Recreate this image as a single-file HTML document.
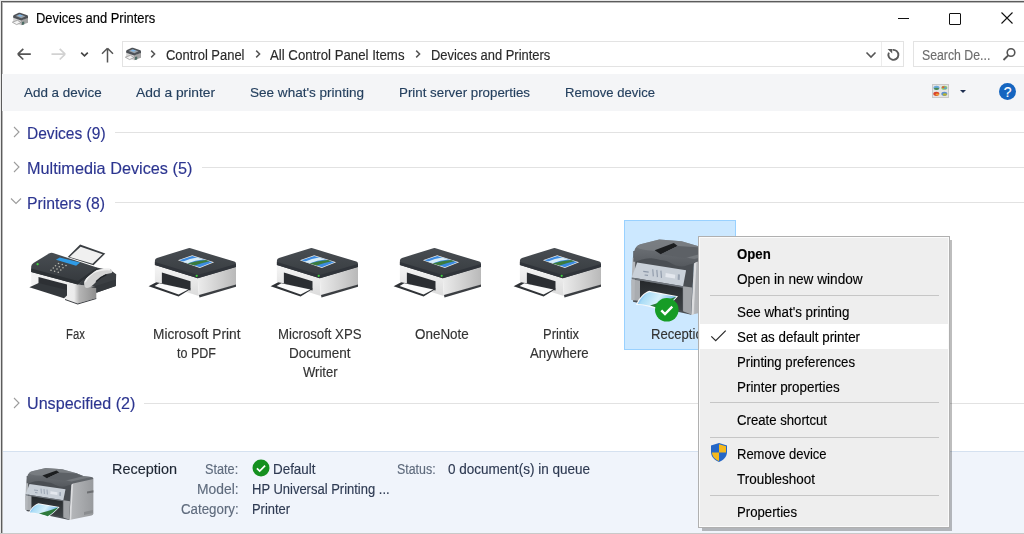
<!DOCTYPE html><html><head><meta charset="utf-8"><style>
html,body{margin:0;padding:0;width:1024px;height:534px;overflow:hidden;background:#fff}
body{position:relative;font-family:"Liberation Sans",sans-serif}
.t{position:absolute;line-height:0;white-space:nowrap;font-family:"Liberation Sans",sans-serif;transform-origin:0 0;-webkit-text-stroke:0.15px currentColor}
svg{overflow:visible}
</style></head><body>
<div style="z-index:1;position:absolute;left:0;top:0;width:1024px;height:534px;background:#e9e9e9"></div>
<div style="z-index:1;position:absolute;left:1px;top:1px;width:1023px;height:532px;background:#fff;border-left:1px solid #5c5c5c;border-top:1px solid #5c5c5c;box-sizing:border-box"></div>
<div style="z-index:1;position:absolute;left:0;top:533px;width:1024px;height:1px;background:#c9c9c9"></div>
<div style="z-index:1;position:absolute;left:2px;top:2px;width:1022px;height:1px;background:#b9b9b9"></div>
<div style="z-index:1;position:absolute;left:2px;top:2px;width:1px;height:531px;background:#b9b9b9"></div>
<div style="z-index:1;position:absolute;left:898px;top:18px;width:11px;height:1px;background:#111"></div>
<div style="z-index:1;position:absolute;left:949px;top:12.5px;width:10px;height:10px;border:1.2px solid #111;box-sizing:content-box;border-radius:1px"></div>
<svg style="z-index:1;position:absolute;left:1000px;top:11px" width="14" height="14" viewBox="0 0 14 14"><path d="M1.5 1.5L12.5 12.5M12.5 1.5L1.5 12.5" stroke="#111" stroke-width="1.1"/></svg>
<svg style="z-index:1;position:absolute;left:14px;top:46px" width="20" height="16" viewBox="0 0 20 16"><path d="M3.8 8.2H16.8M3.8 8.2L9.3 2.9M3.8 8.2L9.3 13.5" stroke="#555" stroke-width="1.7" fill="none"/></svg>
<svg style="z-index:1;position:absolute;left:49px;top:46px" width="20" height="16" viewBox="0 0 20 16"><path d="M2.5 8.2H16.2M16.2 8.2L10.7 2.9M16.2 8.2L10.7 13.5" stroke="#d2d2d2" stroke-width="1.7" fill="none"/></svg>
<svg style="z-index:1;position:absolute;left:79px;top:49px" width="11" height="9" viewBox="0 0 11 9"><path d="M2.2 3.6L5.5 6.8L8.8 3.6" stroke="#444" stroke-width="1.7" fill="none"/></svg>
<svg style="z-index:1;position:absolute;left:99px;top:46px" width="16" height="18" viewBox="0 0 16 18"><path d="M8.5 2.3V16.5M8.5 2.3L3 7.8M8.5 2.3L14 7.8" stroke="#555" stroke-width="1.5" fill="none"/></svg>
<div style="z-index:1;position:absolute;left:122px;top:41px;width:782px;height:26px;border:1px solid #e3e3e3;box-sizing:border-box"></div>
<div style="z-index:1;position:absolute;left:881px;top:42px;width:1px;height:24px;background:#ececec"></div>
<div style="z-index:1;position:absolute;left:913px;top:41px;width:120px;height:26px;border:1px solid #e3e3e3;box-sizing:border-box"></div>
<svg style="z-index:1;position:absolute;left:149px;top:49px" width="8" height="10" viewBox="0 0 8 10"><path d="M2.2 1.6L5.6 5L2.2 8.4" stroke="#555" stroke-width="1.5" fill="none"/></svg>
<svg style="z-index:1;position:absolute;left:253.5px;top:49px" width="8" height="10" viewBox="0 0 8 10"><path d="M2.2 1.6L5.6 5L2.2 8.4" stroke="#555" stroke-width="1.5" fill="none"/></svg>
<svg style="z-index:1;position:absolute;left:413.5px;top:49px" width="8" height="10" viewBox="0 0 8 10"><path d="M2.2 1.6L5.6 5L2.2 8.4" stroke="#555" stroke-width="1.5" fill="none"/></svg>
<svg style="z-index:1;position:absolute;left:864px;top:50px" width="14" height="10" viewBox="0 0 14 10"><path d="M2.5 2.5L7 7L11.5 2.5" stroke="#555" stroke-width="1.6" fill="none"/></svg>
<svg style="z-index:1;position:absolute;left:885px;top:47px" width="16" height="16" viewBox="0 0 16 16"><path d="M7.6 2.9A5 5 0 1 1 3.9 5.6" stroke="#5a5a5a" stroke-width="1.9" fill="none"/><path d="M2.6 1.9L7.2 1.9L7.2 6.5Z" fill="#5a5a5a"/></svg>
<svg style="z-index:1;position:absolute;left:1000px;top:46px" width="18" height="16" viewBox="0 0 18 16"><circle cx="11" cy="6.5" r="3.8" stroke="#555" stroke-width="1.6" fill="none"/><path d="M8.2 9.3L3.5 14" stroke="#555" stroke-width="1.8"/></svg>
<div style="z-index:1;position:absolute;left:2px;top:74px;width:1022px;height:37px;background:#f4f5f7"></div>
<div style="z-index:1;position:absolute;left:959.5px;top:89.5px;width:0;height:0;border-left:3px solid transparent;border-right:3px solid transparent;border-top:3.5px solid #1e2f50"></div>
<div style="z-index:1;position:absolute;left:999px;top:83px;width:17px;height:17px;border-radius:50%;background:#1565c0"></div>
<svg style="z-index:1;position:absolute;left:931.5px;top:84px" width="17" height="14" viewBox="0 0 17 14"><rect x="0.5" y="0.5" width="16" height="13" fill="#e4e4e4" stroke="#c9c9c9"/><ellipse cx="4.5" cy="3.8" rx="3" ry="2" fill="#6aa9dc"/><ellipse cx="4.5" cy="4.8" rx="2.6" ry="1.1" fill="#4d8a52"/><ellipse cx="12.3" cy="3.8" rx="3" ry="2" fill="#8cc46a"/><ellipse cx="11.3" cy="3.3" rx="1.4" ry="1" fill="#e05a3a"/><ellipse cx="13.3" cy="4.2" rx="1.3" ry="0.9" fill="#5aa0d8"/><ellipse cx="4.3" cy="9.8" rx="3" ry="2.1" fill="#d8442a"/><ellipse cx="5.3" cy="10.6" rx="1.8" ry="1" fill="#f0a030"/><ellipse cx="12.3" cy="9.8" rx="3" ry="2.1" fill="#5b8fd0"/><ellipse cx="12.8" cy="10.5" rx="2" ry="1.2" fill="#b9b22e"/></svg>
<div style="z-index:1;position:absolute;left:115px;top:132px;width:909px;height:1px;background:#e2e2e2"></div>
<svg style="z-index:1;position:absolute;left:12px;top:126px" width="9" height="12" viewBox="0 0 9 12"><path d="M2 1L7 6L2 11" stroke="#9c9c9c" stroke-width="1.1" fill="none"/></svg>
<div style="z-index:1;position:absolute;left:202px;top:167px;width:822px;height:1px;background:#e2e2e2"></div>
<svg style="z-index:1;position:absolute;left:12px;top:161px" width="9" height="12" viewBox="0 0 9 12"><path d="M2 1L7 6L2 11" stroke="#9c9c9c" stroke-width="1.1" fill="none"/></svg>
<div style="z-index:1;position:absolute;left:115px;top:202px;width:909px;height:1px;background:#e2e2e2"></div>
<svg style="z-index:1;position:absolute;left:10px;top:197px" width="12" height="8" viewBox="0 0 12 8"><path d="M1 1.5L6 6.5L11 1.5" stroke="#9c9c9c" stroke-width="1.1" fill="none"/></svg>
<div style="z-index:1;position:absolute;left:144px;top:403px;width:880px;height:1px;background:#e2e2e2"></div>
<svg style="z-index:1;position:absolute;left:12px;top:397px" width="9" height="12" viewBox="0 0 9 12"><path d="M2 1L7 6L2 11" stroke="#9c9c9c" stroke-width="1.1" fill="none"/></svg>
<div style="z-index:1;position:absolute;left:624px;top:220px;width:112px;height:130px;background:#cce8ff;border:1px solid #99d1ff;box-sizing:border-box"></div>
<svg style="z-index:1;position:absolute;left:25px;top:240px" width="100" height="66" viewBox="0 0 100 66">
<defs>
<linearGradient id="fx_t" x1="0" y1="0" x2="0" y2="1"><stop offset="0" stop-color="#484d52"/><stop offset="1" stop-color="#34383c"/></linearGradient>
<linearGradient id="fx_b" x1="0" y1="0" x2="1" y2="0"><stop offset="0" stop-color="#f2f2f2"/><stop offset="0.66" stop-color="#ececec"/><stop offset="0.74" stop-color="#b5b5b5"/><stop offset="1" stop-color="#8e8e8e"/></linearGradient>
</defs>
<path d="M6.2 32 L52.8 44.4 L71.3 47 L71.3 58 L52.7 63.4 L40 59 L6.2 45 Z" fill="url(#fx_b)"/>
<path d="M40 59 L52.7 63.4 L71.3 58 L71.3 59 L52.7 64.4 L40 60 Z" fill="#3a3d41"/>
<path d="M13.5 37 L42 44.5 L42 55 L13.5 47 Z" fill="#2d3034"/>
<path d="M4.4 47.3 L13.7 43 L42 50 L42 55.6 L39 58.2 Z" fill="#34383c"/>
<path d="M52.8 44.5 L71.7 27.5 L86 30.5 L91.2 34.2 L90.8 45.9 L71.3 52.7 L71.3 47 Z" fill="#3b3f43"/>
<path d="M66 47.5 L91 39.5 L90.8 45.9 L71.3 52.7 L71.3 48 Z" fill="#34383c"/>
<path d="M59 42.5 C61 38 66 32.5 71 30.5 C75 29 80 28.3 85.9 29 L87.4 31.2 L86.7 33.1 C83 33.5 80 34.5 77 36.5 C74 38.5 72 40.5 70 43 C67 46 65 47.7 62 48 C60 48 59 46 59 42.5 Z" fill="#d3d3d3"/>
<path d="M60 42 C62.5 37.5 67 33 71.5 31.3 C75.5 29.8 80 29.2 85 29.6" stroke="#efefef" stroke-width="1.6" fill="none"/>
<path d="M71 41.7 C74 38.5 77.5 36 81.4 34.6" stroke="#1e2125" stroke-width="1.2" fill="none"/>
<path d="M6.2 26.5 Q6.2 24.5 8.5 23 L24 13.5 Q25.8 12.5 28 13 L71.9 27.5 L52.8 44.4 L6.2 32 Z" fill="url(#fx_t)"/>
<path d="M6.2 28.5 L52.8 41 L71.9 27.5 L71.9 29.5 L52.8 44.4 L6.2 32 Z" fill="#2c3034"/>
<path d="M42.7 16.9 L55.1 4.5 L80.3 13.5 L68.5 25.3 Z" fill="#3a3e42"/>
<path d="M44.6 16.9 L55.6 6.7 L77.5 14.2 L67.5 23.8 Z" fill="#f0f0f0"/>
<path d="M30.9 19.7 L34.8 17.4 L55.1 22.5 L51.1 25.8 Z" fill="#2f9be6"/>
<g fill="#b8b8b0">
<circle cx="33.5" cy="23.5" r="0.8"/><circle cx="37.3" cy="24.5" r="0.8"/><circle cx="41" cy="25.5" r="0.8"/>
<circle cx="30.5" cy="25.7" r="0.8"/><circle cx="34.3" cy="26.7" r="0.8"/><circle cx="38" cy="27.7" r="0.8"/>
<circle cx="28.3" cy="28" r="0.8"/><circle cx="32" cy="29" r="0.8"/><circle cx="35.8" cy="30" r="0.8"/>
<circle cx="26" cy="30.2" r="0.8"/><circle cx="29.6" cy="31.2" r="0.8"/><circle cx="33.3" cy="32.2" r="0.8"/>
</g>
<circle cx="12.6" cy="24.2" r="1.1" fill="#3fd13f"/>
</svg>
<svg style="z-index:1;position:absolute;left:145px;top:240px" width="100" height="62" viewBox="0 0 100 62">
<defs>
<linearGradient id="pg_r145" x1="0" y1="0" x2="1" y2="0"><stop offset="0" stop-color="#ececec"/><stop offset="1" stop-color="#b9b9b9"/></linearGradient>
<linearGradient id="pg_t145" x1="0" y1="0" x2="0" y2="1"><stop offset="0" stop-color="#484d52"/><stop offset="1" stop-color="#373b3f"/></linearGradient>
<linearGradient id="pg_f145" x1="0" y1="0" x2="0" y2="1"><stop offset="0" stop-color="#f6f6f6"/><stop offset="1" stop-color="#dcdcdc"/></linearGradient>
</defs>
<path d="M9.9 24.5 L52.8 38 L53.8 56 L9.9 42 Z" fill="url(#pg_f145)"/>
<path d="M52.8 38 L91 27 L91 45 L54 55.5 Z" fill="url(#pg_r145)"/>
<path d="M54 55 L91 44.5 L91 46.8 L54.5 57.5 Z" fill="#3b3e42"/>
<path d="M16.9 32.6 L45.5 41.3 L45.5 50.5 L16.9 43.5 Z" fill="#2b2e32"/>
<path d="M3.6 46.3 L11.2 42.3 L46 48.8 L33.6 56.5 Z" fill="#2f3236"/>
<path d="M9.6 45.9 L14.3 43.3 L43.3 49.5 L33.6 54.6 Z" fill="#fbfbfb"/>
<path d="M9.9 20.8 Q9.9 18.6 12 17.9 L43.3 8.3 Q44.4 7.9 45.6 8.3 L89.3 21.6 Q91 22.2 91 23.8 L91 27 L52.8 38.3 L9.9 25 Z" fill="url(#pg_t145)"/>
<path d="M9.9 22 L52.8 35 L91 24 L91 27 L52.8 38.3 L9.9 25 Z" fill="#30343a"/>
<path d="M32.9 20.2 L47.2 15.2 L69.1 22.3 L54.8 28 Z" fill="#f2f0ea"/>
<path d="M34.4 20.3 L47.3 15.9 L67.4 22.3 L54.8 27.2 Z" fill="#3d8be0"/>
<path d="M37.5 21.8 Q45 18.5 52 17.6 L58.5 19.6 Q50 20.5 43 23.2 Z" fill="#d6ecf8"/>
<path d="M42.5 23.5 Q52 20.5 61 20 L64.5 21.2 Q56 23 49.5 25.6 Z" fill="#3b7b3e"/>

<circle cx="51.7" cy="35.8" r="1.1" fill="#3cd23c"/>
</svg>
<svg style="z-index:1;position:absolute;left:267.3px;top:240px" width="100" height="62" viewBox="0 0 100 62">
<defs>
<linearGradient id="pg_r267_3" x1="0" y1="0" x2="1" y2="0"><stop offset="0" stop-color="#ececec"/><stop offset="1" stop-color="#b9b9b9"/></linearGradient>
<linearGradient id="pg_t267_3" x1="0" y1="0" x2="0" y2="1"><stop offset="0" stop-color="#484d52"/><stop offset="1" stop-color="#373b3f"/></linearGradient>
<linearGradient id="pg_f267_3" x1="0" y1="0" x2="0" y2="1"><stop offset="0" stop-color="#f6f6f6"/><stop offset="1" stop-color="#dcdcdc"/></linearGradient>
</defs>
<path d="M9.9 24.5 L52.8 38 L53.8 56 L9.9 42 Z" fill="url(#pg_f267_3)"/>
<path d="M52.8 38 L91 27 L91 45 L54 55.5 Z" fill="url(#pg_r267_3)"/>
<path d="M54 55 L91 44.5 L91 46.8 L54.5 57.5 Z" fill="#3b3e42"/>
<path d="M16.9 32.6 L45.5 41.3 L45.5 50.5 L16.9 43.5 Z" fill="#2b2e32"/>
<path d="M3.6 46.3 L11.2 42.3 L46 48.8 L33.6 56.5 Z" fill="#2f3236"/>
<path d="M9.6 45.9 L14.3 43.3 L43.3 49.5 L33.6 54.6 Z" fill="#fbfbfb"/>
<path d="M9.9 20.8 Q9.9 18.6 12 17.9 L43.3 8.3 Q44.4 7.9 45.6 8.3 L89.3 21.6 Q91 22.2 91 23.8 L91 27 L52.8 38.3 L9.9 25 Z" fill="url(#pg_t267_3)"/>
<path d="M9.9 22 L52.8 35 L91 24 L91 27 L52.8 38.3 L9.9 25 Z" fill="#30343a"/>
<path d="M32.9 20.2 L47.2 15.2 L69.1 22.3 L54.8 28 Z" fill="#f2f0ea"/>
<path d="M34.4 20.3 L47.3 15.9 L67.4 22.3 L54.8 27.2 Z" fill="#3d8be0"/>
<path d="M37.5 21.8 Q45 18.5 52 17.6 L58.5 19.6 Q50 20.5 43 23.2 Z" fill="#d6ecf8"/>
<path d="M42.5 23.5 Q52 20.5 61 20 L64.5 21.2 Q56 23 49.5 25.6 Z" fill="#3b7b3e"/>

<circle cx="51.7" cy="35.8" r="1.1" fill="#3cd23c"/>
</svg>
<svg style="z-index:1;position:absolute;left:390.1px;top:240px" width="100" height="62" viewBox="0 0 100 62">
<defs>
<linearGradient id="pg_r390_1" x1="0" y1="0" x2="1" y2="0"><stop offset="0" stop-color="#ececec"/><stop offset="1" stop-color="#b9b9b9"/></linearGradient>
<linearGradient id="pg_t390_1" x1="0" y1="0" x2="0" y2="1"><stop offset="0" stop-color="#484d52"/><stop offset="1" stop-color="#373b3f"/></linearGradient>
<linearGradient id="pg_f390_1" x1="0" y1="0" x2="0" y2="1"><stop offset="0" stop-color="#f6f6f6"/><stop offset="1" stop-color="#dcdcdc"/></linearGradient>
</defs>
<path d="M9.9 24.5 L52.8 38 L53.8 56 L9.9 42 Z" fill="url(#pg_f390_1)"/>
<path d="M52.8 38 L91 27 L91 45 L54 55.5 Z" fill="url(#pg_r390_1)"/>
<path d="M54 55 L91 44.5 L91 46.8 L54.5 57.5 Z" fill="#3b3e42"/>
<path d="M16.9 32.6 L45.5 41.3 L45.5 50.5 L16.9 43.5 Z" fill="#2b2e32"/>
<path d="M3.6 46.3 L11.2 42.3 L46 48.8 L33.6 56.5 Z" fill="#2f3236"/>
<path d="M9.6 45.9 L14.3 43.3 L43.3 49.5 L33.6 54.6 Z" fill="#fbfbfb"/>
<path d="M9.9 20.8 Q9.9 18.6 12 17.9 L43.3 8.3 Q44.4 7.9 45.6 8.3 L89.3 21.6 Q91 22.2 91 23.8 L91 27 L52.8 38.3 L9.9 25 Z" fill="url(#pg_t390_1)"/>
<path d="M9.9 22 L52.8 35 L91 24 L91 27 L52.8 38.3 L9.9 25 Z" fill="#30343a"/>
<path d="M32.9 20.2 L47.2 15.2 L69.1 22.3 L54.8 28 Z" fill="#f2f0ea"/>
<path d="M34.4 20.3 L47.3 15.9 L67.4 22.3 L54.8 27.2 Z" fill="#3d8be0"/>
<path d="M37.5 21.8 Q45 18.5 52 17.6 L58.5 19.6 Q50 20.5 43 23.2 Z" fill="#d6ecf8"/>
<path d="M42.5 23.5 Q52 20.5 61 20 L64.5 21.2 Q56 23 49.5 25.6 Z" fill="#3b7b3e"/>

<circle cx="51.7" cy="35.8" r="1.1" fill="#3cd23c"/>
</svg>
<svg style="z-index:1;position:absolute;left:510.3px;top:240px" width="100" height="62" viewBox="0 0 100 62">
<defs>
<linearGradient id="pg_r510_3" x1="0" y1="0" x2="1" y2="0"><stop offset="0" stop-color="#ececec"/><stop offset="1" stop-color="#b9b9b9"/></linearGradient>
<linearGradient id="pg_t510_3" x1="0" y1="0" x2="0" y2="1"><stop offset="0" stop-color="#484d52"/><stop offset="1" stop-color="#373b3f"/></linearGradient>
<linearGradient id="pg_f510_3" x1="0" y1="0" x2="0" y2="1"><stop offset="0" stop-color="#f6f6f6"/><stop offset="1" stop-color="#dcdcdc"/></linearGradient>
</defs>
<path d="M9.9 24.5 L52.8 38 L53.8 56 L9.9 42 Z" fill="url(#pg_f510_3)"/>
<path d="M52.8 38 L91 27 L91 45 L54 55.5 Z" fill="url(#pg_r510_3)"/>
<path d="M54 55 L91 44.5 L91 46.8 L54.5 57.5 Z" fill="#3b3e42"/>
<path d="M16.9 32.6 L45.5 41.3 L45.5 50.5 L16.9 43.5 Z" fill="#2b2e32"/>
<path d="M3.6 46.3 L11.2 42.3 L46 48.8 L33.6 56.5 Z" fill="#2f3236"/>
<path d="M9.6 45.9 L14.3 43.3 L43.3 49.5 L33.6 54.6 Z" fill="#fbfbfb"/>
<path d="M9.9 20.8 Q9.9 18.6 12 17.9 L43.3 8.3 Q44.4 7.9 45.6 8.3 L89.3 21.6 Q91 22.2 91 23.8 L91 27 L52.8 38.3 L9.9 25 Z" fill="url(#pg_t510_3)"/>
<path d="M9.9 22 L52.8 35 L91 24 L91 27 L52.8 38.3 L9.9 25 Z" fill="#30343a"/>
<path d="M32.9 20.2 L47.2 15.2 L69.1 22.3 L54.8 28 Z" fill="#f2f0ea"/>
<path d="M34.4 20.3 L47.3 15.9 L67.4 22.3 L54.8 27.2 Z" fill="#3d8be0"/>
<path d="M37.5 21.8 Q45 18.5 52 17.6 L58.5 19.6 Q50 20.5 43 23.2 Z" fill="#d6ecf8"/>
<path d="M42.5 23.5 Q52 20.5 61 20 L64.5 21.2 Q56 23 49.5 25.6 Z" fill="#3b7b3e"/>

<circle cx="51.7" cy="35.8" r="1.1" fill="#3cd23c"/>
</svg>
<svg style="z-index:1;position:absolute;left:631.492px;top:237.82999999999998px" width="95.2" height="81.2" viewBox="0 0 70 56" preserveAspectRatio="none">
<defs>
<linearGradient id="mrr" x1="0" y1="0" x2="1" y2="0"><stop offset="0" stop-color="#d6d7d9"/><stop offset="0.12" stop-color="#b3b5b8"/><stop offset="1" stop-color="#989a9d"/></linearGradient>
<linearGradient id="mtr" x1="0" y1="0" x2="0" y2="1"><stop offset="0" stop-color="#74787d"/><stop offset="1" stop-color="#55595e"/></linearGradient>
<linearGradient id="msr" x1="0" y1="0" x2="0" y2="1"><stop offset="0" stop-color="#25282b"/><stop offset="1" stop-color="#3e4347"/></linearGradient>
<linearGradient id="mpr" x1="0" y1="0" x2="1" y2="0.3"><stop offset="0" stop-color="#2f86ef"/><stop offset="0.25" stop-color="#a9dcf6"/><stop offset="0.6" stop-color="#d6f0fb"/><stop offset="1" stop-color="#6fb5e8"/></linearGradient>
</defs>
<path d="M46.5 16.3 Q47 14.5 49 14 L66.2 10.1 Q68.4 10 68.4 12 L68.4 46.5 Q68.4 48 66.5 48.5 L44.3 53 Z" fill="url(#mrr)"/>
<path d="M46.5 16.5 L48.2 16 L46 53 L44.3 53 Z" fill="#dcdddf"/>
<path d="M62 24.5 L68.4 23.3 L68.4 25.5 L62 26.6 Z" fill="#6c6e71"/>
<path d="M59 45 L68 43 L68 46 L59 48 Z" fill="#8a8c8f"/>
<path d="M1.7 9 L46.5 13 L44.3 53 L1.5 44 Z" fill="#4a4e53"/>
<path d="M0.2 28.6 L6.6 29.3 L6.6 43.4 L0.4 42.8 Z" fill="#a9acb0"/>
<path d="M1.2 13.5 L3.2 14 L2.6 43 L0.4 42.8 L0.6 27 Z" fill="#b4b7bb"/>
<path d="M6.6 29.3 L37.7 34 L37.7 50.2 L6.6 43.4 Z" fill="url(#msr)"/>
<path d="M38.3 33.3 L45 34.2 L44.3 52.8 L38.3 50.6 Z" fill="#a0a3a7"/>
<path d="M3.9 6.2 Q5 4.8 7 4.3 L20.8 1.1 L37.2 2.3 L51.5 6.2 L58.3 9 L66.2 10.1 Q68.4 10.4 68.4 12 L48 16.5 L46.5 17.5 C42 18.5 40 19.8 37.2 19.7 C31 19.2 28 16 25.3 15.7 C20 15 17 14 14 14 C9 14 5 16.2 2.8 16.3 L1.7 16.3 Q1.7 8 3.9 6.2 Z" fill="url(#mtr)"/>
<path d="M3.9 6.2 Q5 4.8 7 4.3 L20.8 1.1 L37.2 2.3 L51.5 6.2 L58.3 9 L66.2 10.1 L46.5 14.5 C40 13.5 30 10 20 9 C12 8.5 6 8 3.9 6.2 Z" fill="#7d8186" opacity="0.7"/>
<path d="M17.4 8.4 L31.5 3.4 L34.3 5.6 L21.9 11.2 Z" fill="#1c1e20"/>
<path d="M21.9 11.2 L34.3 5.6 L51.5 6.6 L58 9.2 L40 13.8 Z" fill="#5d6166"/>
<path d="M4.5 16.9 L40.5 22.3 L38.3 33.3 L0.6 27.2 Z" fill="#c9d0d8"/>
<path d="M0.6 27.2 L38.3 33.3 L38.1 34.3 L0.5 28.2 Z" fill="#6f757c"/>
<path d="M9 23 L13 23.5 M16 21.6 L16.4 26.5 M19 22 L19.4 27 M22 22.5 L22.4 27.5 M10 25.5 L12.5 25.8" stroke="#8d98a8" stroke-width="0.8"/>
<path d="M25.5 24.2 L32.5 25.3 L32.3 28 L25.3 26.9 Z" fill="#e4e8ee"/>
<path d="M34.5 25 L36 25.2 L35.8 29 L34.3 28.8 Z" fill="#9aa4b2"/>
<path d="M3.6 46.1 C6 41 9.5 37.5 13.4 36.3 L34.6 40.1 C31 44 27 47.5 22.8 50.2 C17 48 10 46.3 3.6 46.1 Z" fill="#fafafa"/>
<path d="M4.8 45.6 C7 41.2 10 38.2 13.6 37.2 L33.2 40.6 C30 44 26.5 47 22.6 49.2 C17 47.2 10.5 45.8 4.8 45.6 Z" fill="url(#mpr)"/>
<path d="M14 46.6 C20 45 27 42.5 33.2 40.6 C30 44 26.5 47 22.6 49.2 C19.5 48.2 16.5 47.2 14 46.6 Z" fill="#2f7a3c"/>
</svg>
<svg style="z-index:1;position:absolute;left:654.6px;top:298.1px" width="24" height="24" viewBox="0 0 24 24"><circle cx="11.8" cy="11.8" r="11.8" fill="#169c26"/><path d="M6.3 12.3L10 16L17.3 8.7" stroke="#fff" stroke-width="2.4" fill="none"/></svg>
<svg style="z-index:1;position:absolute;left:11.5px;top:12px" width="17" height="14" viewBox="0 0 17 14">
<path d="M1.2 5.5 L9 8.3 L9 13.3 L1.2 10.5 Z" fill="#d4d4d4"/>
<path d="M9 8.3 L16 5.8 L16 10.8 L9 13.3 Z" fill="#a3a3a3"/>
<path d="M1.2 4.2 Q1.2 3.4 2 3 L6.8 0.8 Q7.4 0.6 8 0.8 L15.4 3.3 Q16 3.6 16 4.2 L16 6 L9 8.5 L1.2 5.8 Z" fill="#4e5257"/>
<path d="M3.5 4 L7.2 2.2 L13.5 4.3 L9.5 6.2 Z" fill="#9aa3ab"/>
<path d="M5.6 3.6 L8 2.6 L11 3.6 L8.5 4.7 Z" fill="#7fb6e6"/>
<path d="M0.3 10.2 L5.5 8.3 L9 10.6 L4.6 12.6 Z" fill="#f4f4f4"/>
<path d="M0.3 10.2 L5.5 8.3 L9 10.6 L4.6 12.6 Z" fill="none" stroke="#8c8c8c" stroke-width="0.7"/>
<path d="M10 10.1 L12.2 9.4 L12.2 12.4 L10 13 Z" fill="#4d6d66"/>
</svg>
<svg style="z-index:1;position:absolute;left:124.8px;top:47px" width="17" height="14" viewBox="0 0 17 14">
<path d="M1.2 5.5 L9 8.3 L9 13.3 L1.2 10.5 Z" fill="#d4d4d4"/>
<path d="M9 8.3 L16 5.8 L16 10.8 L9 13.3 Z" fill="#a3a3a3"/>
<path d="M1.2 4.2 Q1.2 3.4 2 3 L6.8 0.8 Q7.4 0.6 8 0.8 L15.4 3.3 Q16 3.6 16 4.2 L16 6 L9 8.5 L1.2 5.8 Z" fill="#4e5257"/>
<path d="M3.5 4 L7.2 2.2 L13.5 4.3 L9.5 6.2 Z" fill="#9aa3ab"/>
<path d="M5.6 3.6 L8 2.6 L11 3.6 L8.5 4.7 Z" fill="#7fb6e6"/>
<path d="M0.3 10.2 L5.5 8.3 L9 10.6 L4.6 12.6 Z" fill="#f4f4f4"/>
<path d="M0.3 10.2 L5.5 8.3 L9 10.6 L4.6 12.6 Z" fill="none" stroke="#8c8c8c" stroke-width="0.7"/>
<path d="M10 10.1 L12.2 9.4 L12.2 12.4 L10 13 Z" fill="#4d6d66"/>
</svg>
<div style="z-index:1;position:absolute;left:3px;top:451px;width:1021px;height:82px;background:#f0f4fb;border-top:1px solid #d5e1f0;box-sizing:border-box"></div>
<svg style="z-index:1;position:absolute;left:24.8px;top:466.8px" width="70.0" height="56.0" viewBox="0 0 70 56" preserveAspectRatio="none">
<defs>
<linearGradient id="mrd" x1="0" y1="0" x2="1" y2="0"><stop offset="0" stop-color="#d6d7d9"/><stop offset="0.12" stop-color="#b3b5b8"/><stop offset="1" stop-color="#989a9d"/></linearGradient>
<linearGradient id="mtd" x1="0" y1="0" x2="0" y2="1"><stop offset="0" stop-color="#74787d"/><stop offset="1" stop-color="#55595e"/></linearGradient>
<linearGradient id="msd" x1="0" y1="0" x2="0" y2="1"><stop offset="0" stop-color="#25282b"/><stop offset="1" stop-color="#3e4347"/></linearGradient>
<linearGradient id="mpd" x1="0" y1="0" x2="1" y2="0.3"><stop offset="0" stop-color="#2f86ef"/><stop offset="0.25" stop-color="#a9dcf6"/><stop offset="0.6" stop-color="#d6f0fb"/><stop offset="1" stop-color="#6fb5e8"/></linearGradient>
</defs>
<path d="M46.5 16.3 Q47 14.5 49 14 L66.2 10.1 Q68.4 10 68.4 12 L68.4 46.5 Q68.4 48 66.5 48.5 L44.3 53 Z" fill="url(#mrd)"/>
<path d="M46.5 16.5 L48.2 16 L46 53 L44.3 53 Z" fill="#dcdddf"/>
<path d="M62 24.5 L68.4 23.3 L68.4 25.5 L62 26.6 Z" fill="#6c6e71"/>
<path d="M59 45 L68 43 L68 46 L59 48 Z" fill="#8a8c8f"/>
<path d="M1.7 9 L46.5 13 L44.3 53 L1.5 44 Z" fill="#4a4e53"/>
<path d="M0.2 28.6 L6.6 29.3 L6.6 43.4 L0.4 42.8 Z" fill="#a9acb0"/>
<path d="M1.2 13.5 L3.2 14 L2.6 43 L0.4 42.8 L0.6 27 Z" fill="#b4b7bb"/>
<path d="M6.6 29.3 L37.7 34 L37.7 50.2 L6.6 43.4 Z" fill="url(#msd)"/>
<path d="M38.3 33.3 L45 34.2 L44.3 52.8 L38.3 50.6 Z" fill="#a0a3a7"/>
<path d="M3.9 6.2 Q5 4.8 7 4.3 L20.8 1.1 L37.2 2.3 L51.5 6.2 L58.3 9 L66.2 10.1 Q68.4 10.4 68.4 12 L48 16.5 L46.5 17.5 C42 18.5 40 19.8 37.2 19.7 C31 19.2 28 16 25.3 15.7 C20 15 17 14 14 14 C9 14 5 16.2 2.8 16.3 L1.7 16.3 Q1.7 8 3.9 6.2 Z" fill="url(#mtd)"/>
<path d="M3.9 6.2 Q5 4.8 7 4.3 L20.8 1.1 L37.2 2.3 L51.5 6.2 L58.3 9 L66.2 10.1 L46.5 14.5 C40 13.5 30 10 20 9 C12 8.5 6 8 3.9 6.2 Z" fill="#7d8186" opacity="0.7"/>
<path d="M17.4 8.4 L31.5 3.4 L34.3 5.6 L21.9 11.2 Z" fill="#1c1e20"/>
<path d="M21.9 11.2 L34.3 5.6 L51.5 6.6 L58 9.2 L40 13.8 Z" fill="#5d6166"/>
<path d="M4.5 16.9 L40.5 22.3 L38.3 33.3 L0.6 27.2 Z" fill="#c9d0d8"/>
<path d="M0.6 27.2 L38.3 33.3 L38.1 34.3 L0.5 28.2 Z" fill="#6f757c"/>
<path d="M9 23 L13 23.5 M16 21.6 L16.4 26.5 M19 22 L19.4 27 M22 22.5 L22.4 27.5 M10 25.5 L12.5 25.8" stroke="#8d98a8" stroke-width="0.8"/>
<path d="M25.5 24.2 L32.5 25.3 L32.3 28 L25.3 26.9 Z" fill="#e4e8ee"/>
<path d="M34.5 25 L36 25.2 L35.8 29 L34.3 28.8 Z" fill="#9aa4b2"/>
<path d="M3.6 46.1 C6 41 9.5 37.5 13.4 36.3 L34.6 40.1 C31 44 27 47.5 22.8 50.2 C17 48 10 46.3 3.6 46.1 Z" fill="#fafafa"/>
<path d="M4.8 45.6 C7 41.2 10 38.2 13.6 37.2 L33.2 40.6 C30 44 26.5 47 22.6 49.2 C17 47.2 10.5 45.8 4.8 45.6 Z" fill="url(#mpd)"/>
<path d="M14 46.6 C20 45 27 42.5 33.2 40.6 C30 44 26.5 47 22.6 49.2 C19.5 48.2 16.5 47.2 14 46.6 Z" fill="#2f7a3c"/>
</svg>
<svg style="z-index:1;position:absolute;left:252px;top:458.5px" width="18" height="18" viewBox="0 0 18 18"><circle cx="9" cy="9" r="8.5" fill="#15901f"/><path d="M4.9 9.3L7.7 12L13.1 6.6" stroke="#fff" stroke-width="1.7" fill="none"/></svg>
<div style="z-index:10;position:absolute;left:702px;top:240px;width:250px;height:291px;background:rgba(0,0,0,0.26);filter:blur(0.7px)"></div>
<div style="z-index:10;position:absolute;left:698px;top:236px;width:252px;height:292px;background:#eeeeee;border:1px solid #b0b0b0;box-sizing:border-box;box-shadow:inset 1px 1px 0 #fbfbfb, inset -1px -1px 0 #fbfbfb"></div>
<div style="z-index:10;position:absolute;left:700px;top:324px;width:248px;height:25px;background:#fff"></div>
<div style="z-index:10;position:absolute;left:710px;top:295px;width:229px;height:1px;background:#c6c6c6"></div>
<div style="z-index:10;position:absolute;left:710px;top:402px;width:229px;height:1px;background:#c6c6c6"></div>
<div style="z-index:10;position:absolute;left:710px;top:437px;width:229px;height:1px;background:#c6c6c6"></div>
<div style="z-index:10;position:absolute;left:710px;top:495px;width:229px;height:1px;background:#c6c6c6"></div>
<svg style="z-index:10;position:absolute;left:709px;top:329px" width="18" height="16" viewBox="0 0 18 16"><path d="M2.3 7.4L6.7 11.6L16.7 1.6" stroke="#2a2a2a" stroke-width="1.25" fill="none"/></svg>
<svg style="z-index:10;position:absolute;left:709px;top:442px" width="20" height="21" viewBox="0 0 20 21"><path d="M10 1L2 3.5V10C2 15 6 18.5 10 20C14 18.5 18 15 18 10V3.5Z" fill="#2567c7"/><path d="M10 2.2L17 4.3V10.5H10Z" fill="#f5b91d"/><path d="M3 10.5H10V19C6.5 17.8 3 14.5 3 10.5Z" fill="#f5b91d"/></svg>
<div class="t" style="left:35.60px;top:18.000px;font-size:14px;color:#000;z-index:1;transform:scaleX(0.9236)">Devices and Printers</div>
<div class="t" style="left:165.70px;top:55.000px;font-size:14px;color:#2a2a2a;z-index:1;transform:scaleX(0.9254)">Control Panel</div>
<div class="t" style="left:270.00px;top:55.000px;font-size:14px;color:#2a2a2a;z-index:1;transform:scaleX(0.9445)">All Control Panel Items</div>
<div class="t" style="left:431.00px;top:55.000px;font-size:14px;color:#2a2a2a;z-index:1;transform:scaleX(0.9236)">Devices and Printers</div>
<div class="t" style="left:921.70px;top:55.000px;font-size:14px;color:#6d6d6d;z-index:1;transform:scaleX(0.8776)">Search De...</div>
<div class="t" style="left:23.70px;top:93.000px;font-size:13.5px;color:#25405f;z-index:1;transform:scaleX(0.9941)">Add a device</div>
<div class="t" style="left:136.00px;top:93.000px;font-size:13.5px;color:#25405f;z-index:1;transform:scaleX(1.0220)">Add a printer</div>
<div class="t" style="left:250.00px;top:93.000px;font-size:13.5px;color:#25405f;z-index:1;transform:scaleX(1.0030)">See what&#x27;s printing</div>
<div class="t" style="left:399.00px;top:93.000px;font-size:13.5px;color:#25405f;z-index:1;transform:scaleX(0.9864)">Print server properties</div>
<div class="t" style="left:565.00px;top:93.000px;font-size:13.5px;color:#25405f;z-index:1;transform:scaleX(0.9673)">Remove device</div>
<div class="t" style="left:1003.70px;top:92.000px;font-size:14px;color:#fff;z-index:1">?</div>
<div class="t" style="left:27.30px;top:133.000px;font-size:16.5px;color:#2c3590;z-index:1;transform:scaleX(0.9420)">Devices (9)</div>
<div class="t" style="left:27.30px;top:168.000px;font-size:16.5px;color:#2c3590;z-index:1;transform:scaleX(0.9857)">Multimedia Devices (5)</div>
<div class="t" style="left:27.30px;top:203.000px;font-size:16.5px;color:#2c3590;z-index:1;transform:scaleX(0.9558)">Printers (8)</div>
<div class="t" style="left:27.30px;top:403.000px;font-size:16.5px;color:#2c3590;z-index:1;transform:scaleX(0.9769)">Unspecified (2)</div>
<div class="t" style="left:65.60px;top:334.000px;font-size:14px;color:#333;z-index:1;transform:scaleX(0.8054)">Fax</div>
<div class="t" style="left:152.55px;top:334.000px;font-size:14px;color:#333;z-index:1;transform:scaleX(0.9780)">Microsoft Print</div>
<div class="t" style="left:176.60px;top:353.000px;font-size:14px;color:#333;z-index:1;transform:scaleX(0.8949)">to PDF</div>
<div class="t" style="left:277.55px;top:334.000px;font-size:14px;color:#333;z-index:1;transform:scaleX(0.9413)">Microsoft XPS</div>
<div class="t" style="left:289.00px;top:353.000px;font-size:14px;color:#333;z-index:1;transform:scaleX(0.9653)">Document</div>
<div class="t" style="left:302.55px;top:372.000px;font-size:14px;color:#333;z-index:1;transform:scaleX(0.9305)">Writer</div>
<div class="t" style="left:415.02px;top:334.000px;font-size:14px;color:#333;z-index:1;transform:scaleX(0.9590)">OneNote</div>
<div class="t" style="left:543.00px;top:334.000px;font-size:14px;color:#333;z-index:1;transform:scaleX(0.9253)">Printix</div>
<div class="t" style="left:529.65px;top:353.000px;font-size:14px;color:#333;z-index:1;transform:scaleX(0.9427)">Anywhere</div>
<div class="t" style="left:650.50px;top:334.000px;font-size:14px;color:#333;z-index:1;transform:scaleX(0.9358)">Reception</div>
<div class="t" style="left:111.70px;top:469.000px;font-size:15px;color:#1e2633;z-index:1;transform:scaleX(0.9623)">Reception</div>
<div class="t" style="left:205.40px;top:469.000px;font-size:14px;color:#5f6b7d;z-index:1;transform:scaleX(0.9073)">State:</div>
<div class="t" style="left:197.00px;top:489.000px;font-size:14px;color:#5f6b7d;z-index:1;transform:scaleX(0.9897)">Model:</div>
<div class="t" style="left:180.90px;top:509.000px;font-size:14px;color:#5f6b7d;z-index:1;transform:scaleX(0.9505)">Category:</div>
<div class="t" style="left:272.90px;top:469.000px;font-size:14px;color:#2e3a52;z-index:1;transform:scaleX(0.9581)">Default</div>
<div class="t" style="left:252.40px;top:489.000px;font-size:14px;color:#2e3a52;z-index:1;transform:scaleX(0.9275)">HP Universal Printing ...</div>
<div class="t" style="left:252.40px;top:509.000px;font-size:14px;color:#2e3a52;z-index:1;transform:scaleX(0.9216)">Printer</div>
<div class="t" style="left:397.00px;top:469.000px;font-size:14px;color:#5f6b7d;z-index:1;transform:scaleX(0.8854)">Status:</div>
<div class="t" style="left:448.30px;top:469.000px;font-size:14px;color:#2e3a52;z-index:1;transform:scaleX(0.9654)">0 document(s) in queue</div>
<div class="t" style="left:737.00px;top:254.000px;font-size:14px;color:#000;z-index:10;font-weight:700;transform:scaleX(0.9418)">Open</div>
<div class="t" style="left:737.00px;top:279.000px;font-size:14px;color:#000;z-index:10;transform:scaleX(0.9722)">Open in new window</div>
<div class="t" style="left:737.00px;top:312.000px;font-size:14px;color:#000;z-index:10;transform:scaleX(0.9537)">See what&#x27;s printing</div>
<div class="t" style="left:737.00px;top:337.000px;font-size:14px;color:#000;z-index:10;transform:scaleX(0.9521)">Set as default printer</div>
<div class="t" style="left:737.00px;top:362.000px;font-size:14px;color:#000;z-index:10;transform:scaleX(0.9418)">Printing preferences</div>
<div class="t" style="left:737.00px;top:387.000px;font-size:14px;color:#000;z-index:10;transform:scaleX(0.9563)">Printer properties</div>
<div class="t" style="left:737.00px;top:420.000px;font-size:14px;color:#000;z-index:10;transform:scaleX(0.9403)">Create shortcut</div>
<div class="t" style="left:737.00px;top:454.000px;font-size:14px;color:#000;z-index:10;transform:scaleX(0.9275)">Remove device</div>
<div class="t" style="left:737.00px;top:479.000px;font-size:14px;color:#000;z-index:10;transform:scaleX(0.9606)">Troubleshoot</div>
<div class="t" style="left:737.00px;top:512.000px;font-size:14px;color:#000;z-index:10;transform:scaleX(0.9403)">Properties</div>
</body></html>
